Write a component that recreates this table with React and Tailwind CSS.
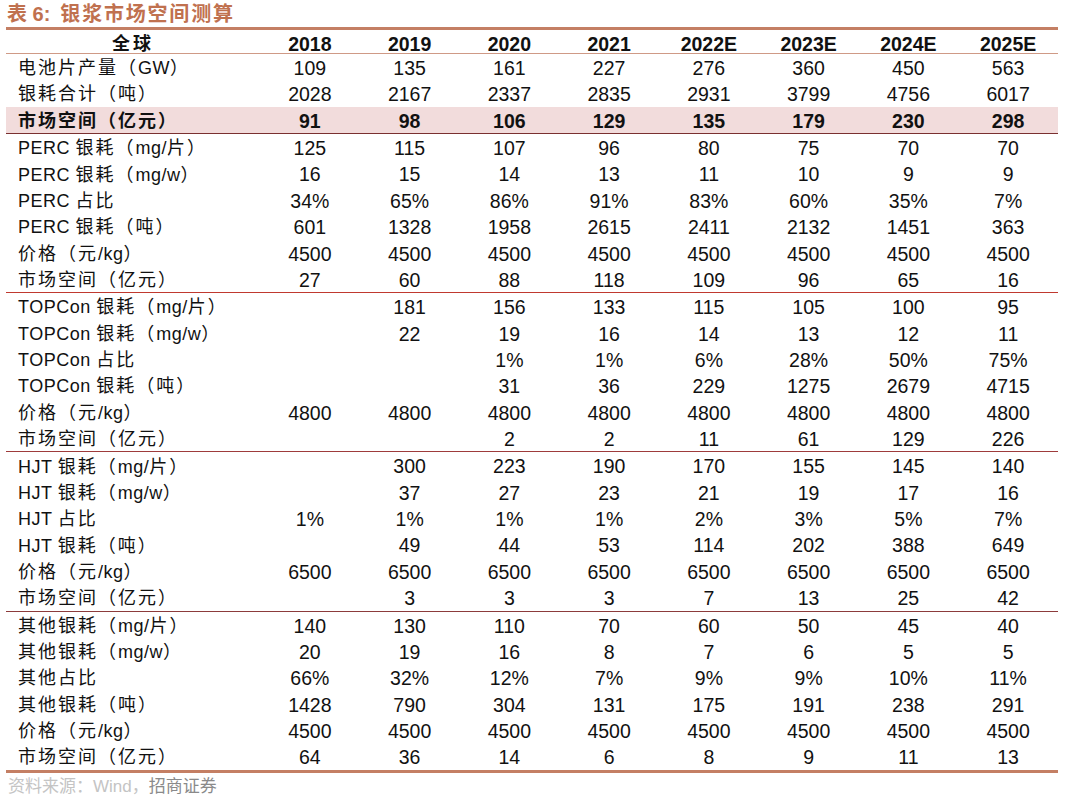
const cn = '"Liberation Sans", "Noto Sans CJK SC", sans-serif';

const sections = [
  {
    rows: [
      ["电池片产量（GW）", ["109", "135", "161", "227", "276", "360", "450", "563"]],
      ["银耗合计（吨）", ["2028", "2167", "2337", "2835", "2931", "3799", "4756", "6017"]],
      ["市场空间（亿元）", ["91", "98", "106", "129", "135", "179", "230", "298"], true],
      ["PERC 银耗（mg/片）", ["125", "115", "107", "96", "80", "75", "70", "70"]],
      ["PERC 银耗（mg/w）", ["16", "15", "14", "13", "11", "10", "9", "9"]],
      ["PERC 占比", ["34%", "65%", "86%", "91%", "83%", "60%", "35%", "7%"]],
      ["PERC 银耗（吨）", ["601", "1328", "1958", "2615", "2411", "2132", "1451", "363"]],
      ["价格（元/kg）", ["4500", "4500", "4500", "4500", "4500", "4500", "4500", "4500"]],
      ["市场空间（亿元）", ["27", "60", "88", "118", "109", "96", "65", "16"]],
    ],
    line: "border-[#c0392f]",
  },
  {
    rows: [
      ["TOPCon 银耗（mg/片）", ["", "181", "156", "133", "115", "105", "100", "95"]],
      ["TOPCon 银耗（mg/w）", ["", "22", "19", "16", "14", "13", "12", "11"]],
      ["TOPCon 占比", ["", "", "1%", "1%", "6%", "28%", "50%", "75%"]],
      ["TOPCon 银耗（吨）", ["", "", "31", "36", "229", "1275", "2679", "4715"]],
      ["价格（元/kg）", ["4800", "4800", "4800", "4800", "4800", "4800", "4800", "4800"]],
      ["市场空间（亿元）", ["", "", "2", "2", "11", "61", "129", "226"]],
    ],
    line: "border-[#9e3b3b]",
  },
  {
    rows: [
      ["HJT 银耗（mg/片）", ["", "300", "223", "190", "170", "155", "145", "140"]],
      ["HJT 银耗（mg/w）", ["", "37", "27", "23", "21", "19", "17", "16"]],
      ["HJT 占比", ["1%", "1%", "1%", "1%", "2%", "3%", "5%", "7%"]],
      ["HJT 银耗（吨）", ["", "49", "44", "53", "114", "202", "388", "649"]],
      ["价格（元/kg）", ["6500", "6500", "6500", "6500", "6500", "6500", "6500", "6500"]],
      ["市场空间（亿元）", ["", "3", "3", "3", "7", "13", "25", "42"]],
    ],
    line: "border-[#8c3b3b]",
  },
  {
    rows: [
      ["其他银耗（mg/片）", ["140", "130", "110", "70", "60", "50", "45", "40"]],
      ["其他银耗（mg/w）", ["20", "19", "16", "8", "7", "6", "5", "5"]],
      ["其他占比", ["66%", "32%", "12%", "7%", "9%", "9%", "10%", "11%"]],
      ["其他银耗（吨）", ["1428", "790", "304", "131", "175", "191", "238", "291"]],
      ["价格（元/kg）", ["4500", "4500", "4500", "4500", "4500", "4500", "4500", "4500"]],
      ["市场空间（亿元）", ["64", "36", "14", "6", "8", "9", "11", "13"]],
    ],
    line: null,
  },
];

const years = ["2018", "2019", "2020", "2021", "2022E", "2023E", "2024E", "2025E"];

// wrap CJK runs so only they get the wide spacing
function Label({ text }) {
  const parts = text.split(/([\u4e00-\u9fff\uff08\uff09]+)/).filter(Boolean);
  return (
    <>
      {parts.map((p, i) =>
        /[\u4e00-\u9fff\uff08\uff09]/.test(p) ? (
          <span key={i} className="tracking-[2px]">{p}</span>
        ) : (
          <span key={i} className="tracking-[0.5px]">{p}</span>
        )
      )}
    </>
  );
}

function Row({ label, values, hl }) {
  return (
    <div
      className={`grid grid-cols-[254px_repeat(8,1fr)] items-center ${
        hl ? "bg-[#f2dcdc] font-bold border-b border-[#7a3030] h-[27.37px]" : "h-[26.37px]"
      }`}
    >
      <div className="pl-[12px] whitespace-nowrap text-[18px]">
        <Label text={label} />
      </div>
      {values.map((v, i) => (
        <div key={i} className="text-center text-[19.5px]">{v}</div>
      ))}
    </div>
  );
}

export default function App() {
  return (
    <div className="w-[1080px] h-[801px] bg-white text-[#111] overflow-hidden" style={{ fontFamily: cn }}>
      <div className="ml-[6px] w-[1052px]">
        <div className="h-[27px] flex items-center text-[20px] font-bold text-[#c0714f] whitespace-nowrap">
          <span className="pl-[1px]">表 6:</span>
          <span className="ml-[10px] tracking-[1.8px]">银浆市场空间测算</span>
        </div>
        <div className="border-t-[3px] border-[#c47f64]">
          <div className="grid grid-cols-[254px_repeat(8,1fr)] items-center h-[24px] border-b border-[#cf9a86] font-bold text-[19.5px]">
            <div className="text-center tracking-[3px] text-[18px]">全球</div>
            {years.map((y) => (
              <div key={y} className="text-center">{y}</div>
            ))}
          </div>
          <div>
            {sections.map((s, si) => (
              <div key={si} className={s.line ? `border-b ${s.line}` : ""}>
                {s.rows.map((r, ri) => (
                  <Row key={ri} label={r[0]} values={r[1]} hl={r[2]} />
                ))}
              </div>
            ))}
          </div>
        </div>
        <div className="border-t-[3px] border-[#c47f64] pt-[1px] pl-[2px] text-[17px] text-[#8a8a8a] whitespace-nowrap">
          <span className="text-[#c4c4c4]">资料来源：Wind，</span>招商证券
        </div>
      </div>
    </div>
  );
}
